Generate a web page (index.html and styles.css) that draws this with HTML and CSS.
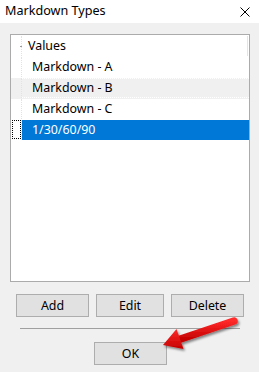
FILE: index.html
```html
<!DOCTYPE html>
<html>
<head>
<meta charset="utf-8">
<link rel="stylesheet" href="styles.css">
</head>
<body>
<div class="window">
  <div class="titlebar">
    <span class="title">Markdown Types</span>
    <svg class="close" width="10" height="10" viewBox="0 0 10 10"><path d="M0.5 0.5 L9.5 9.5 M9.5 0.5 L0.5 9.5" stroke="#000" stroke-width="1" fill="none"/></svg>
  </div>
  <div class="content">
    <div class="listbox">
      <div class="row row-root"><div class="hdr"><span class="tick"></span></div><div class="cell">Values</div></div>
      <div class="row"><div class="hdr"></div><div class="cell item">Markdown - A</div></div>
      <div class="row alt"><div class="hdr"></div><div class="cell item">Markdown - B</div></div>
      <div class="row"><div class="hdr"></div><div class="cell item">Markdown - C</div></div>
      <div class="row selected"><div class="hdr"><span class="focus"></span></div><div class="cell item">1/30/60/90</div></div>
    </div>
    <div class="buttons">
      <button class="btn btn-wide">Add</button>
      <button class="btn btn-mid">Edit</button>
      <button class="btn btn-wide">Delete</button>
    </div>
    <div class="separator"></div>
    <div class="ok-row">
      <button class="btn btn-wide">OK</button>
    </div>
  </div>
  <svg class="arrow" width="100" height="50" viewBox="0 0 100 50">
    <defs>
      <filter id="sh" x="-20%" y="-40%" width="140%" height="180%">
        <feDropShadow dx="1.5" dy="2" stdDeviation="1" flood-color="#000" flood-opacity="0.45"/>
      </filter>
      <linearGradient id="rg" x1="0" y1="0" x2="0" y2="1">
        <stop offset="0" stop-color="#ff2a2a"/>
        <stop offset="1" stop-color="#c40000"/>
      </linearGradient>
    </defs>
    <g filter="url(#sh)">
      <line x1="84" y1="11" x2="29" y2="29.5" stroke="url(#rg)" stroke-width="7.5" stroke-linecap="round"/>
      <polygon points="13,35 26.5,19 33.5,39" fill="url(#rg)"/>
    </g>
  </svg>
</div>
</body>
</html>
```

FILE: styles.css
```css
html, body {
  margin: 0;
  padding: 0;
}
body {
  background: #f0f0f0;
  font-family: "Noto Sans", "Open Sans", sans-serif;
  font-size: 12.4px;
  color: #000;
}
.window {
  position: relative;
  width: 259px;
  height: 372px;
  overflow: hidden;
}
.titlebar {
  height: 23px;
  background: #fff;
  display: flex;
  align-items: center;
  justify-content: space-between;
  padding: 0 9px 1px 5px;
  box-sizing: border-box;
}
.title {
  font-size: 12.6px;
  line-height: 16px;
}
.close {
  display: block;
  margin-top: 1px;
}
.content {
  padding: 11px 10px 0 10px;
}
.listbox {
  width: 240px;
  height: 248px;
  box-sizing: border-box;
  border: 1px solid #ababab;
  background: #fff;
  padding-top: 1px;
}
.row {
  display: flex;
  height: 21px;
}
.hdr {
  width: 10px;
  height: 20px;
  border-right: 1px dotted #e2e2e2;
  position: relative;
}
.cell {
  flex: 1;
  height: 20px;
  line-height: 19px;
  padding-left: 6px;
  white-space: nowrap;
}
.cell.item {
  padding-left: 10px;
}
.row-root .cell {
  border-right: 1px solid #e4e4e4;
  margin-right: 1px;
}
.tick {
  position: absolute;
  right: -1px;
  top: 10px;
  width: 2px;
  height: 1px;
  background: #9a9a9a;
}
.alt {
  background: #f0f0f0;
}
.alt .cell {
  box-sizing: border-box;
  border-top: 1px dotted #fff;
  border-bottom: 1px dotted #fff;
  line-height: 18px;
}
.selected .cell {
  background: #0078d7;
  color: #fff;
}
.focus {
  position: absolute;
  left: 1px;
  top: 0;
  width: 9px;
  height: 19px;
  box-sizing: border-box;
  border: 1px dotted #000;
}
.buttons {
  display: flex;
  gap: 7px;
  margin: 12px 0 0 6px;
}
.btn {
  font-family: "Noto Sans", "Open Sans", sans-serif;
  font-size: 12.4px;
  color: #000;
  height: 23px;
  background: #e1e1e1;
  border: 1px solid #adadad;
  padding: 0;
  margin: 0;
  line-height: 19px;
}
.btn-wide {
  width: 73px;
}
.btn-mid {
  width: 68px;
}
.separator {
  margin: 11px 0 0 10px;
  width: 220px;
  height: 1px;
  background: #a0a0a0;
}
.ok-row {
  margin: 13px 0 0 84px;
}
.arrow {
  position: absolute;
  left: 150px;
  top: 310px;
}
```
